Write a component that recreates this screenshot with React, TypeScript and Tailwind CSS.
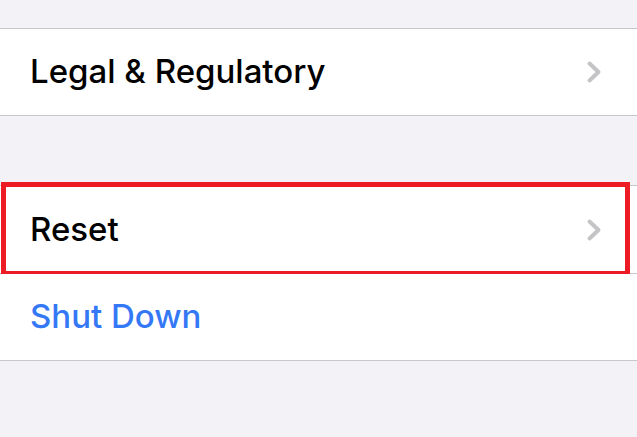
import React from 'react'

function Chevron() {
  return (
    <svg width="16" height="24" viewBox="0 0 16 24" fill="none" className="shrink-0">
      <path d="M3.5 3.5 L12.5 12 L3.5 20.5" stroke="#c4c4c7" strokeWidth="4" strokeLinecap="round" strokeLinejoin="round" />
    </svg>
  )
}

interface RowProps {
  label: string
  blue?: boolean
  chevron?: boolean
  highlight?: boolean
  tall?: boolean
}

function Row({ label, blue, chevron, highlight, tall }: RowProps) {
  return (
    <div className={`relative flex ${tall ? 'h-[87px]' : 'h-[86px]'} items-center justify-between bg-white pl-[30px] pr-[35px]`}>
      <span className={`text-[33px] font-medium tracking-[0px] ${blue ? 'text-[#3478f6]' : 'text-black'}`}>{label}</span>
      {chevron && <Chevron />}
      {highlight && (
        <div className="pointer-events-none absolute left-[1px] right-[7px] top-[-4px] bottom-[-3px] border-[5px] border-[#ed1c24]" />
      )}
    </div>
  )
}

export default function App() {
  return (
    <div className="flex h-[437px] w-[637px] flex-col overflow-hidden bg-[#f2f2f7]" style={{ fontFamily: 'Inter, "Noto Sans", sans-serif' }}>
      <div className="h-[28px]" />
      <div className="border-y border-[#c8c7cc]">
        <Row label="Legal & Regulatory" chevron />
      </div>
      <div className="h-[69px]" />
      <div className="border-y border-[#c8c7cc]">
        <Row label="Reset" chevron highlight tall />
        <div className="h-px bg-[#c8c7cc]" />
        <Row label="Shut Down" blue />
      </div>
    </div>
  )
}
